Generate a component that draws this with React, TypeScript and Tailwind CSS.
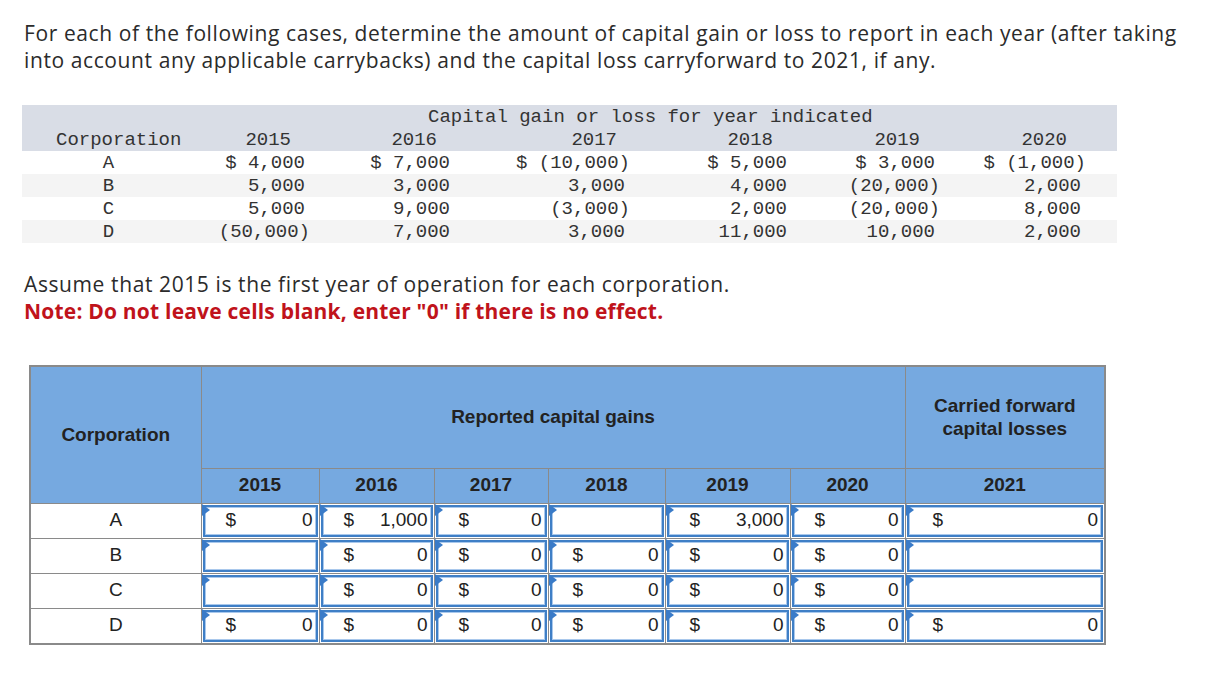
const given = [
  { corp: "A", vals: ["$ 4,000", "$ 7,000", "$ (10,000)", "$ 5,000", "$ 3,000", "$ (1,000)"] },
  { corp: "B", vals: ["5,000", "3,000", "3,000", "4,000", "(20,000)", "2,000"] },
  { corp: "C", vals: ["5,000", "9,000", "(3,000)", "2,000", "(20,000)", "8,000"] },
  { corp: "D", vals: ["(50,000)", "7,000", "3,000", "11,000", "10,000", "2,000"] },
];

const topYears = [
  { year: "2015", w: "w-[115px]", pr: "pr-[19px]" },
  { year: "2016", w: "w-[145px]", pr: "pr-[18px]" },
  { year: "2017", w: "w-[175px]", pr: "pr-[13px]" },
  { year: "2018", w: "w-[162px]", pr: "pr-[19px]" },
  { year: "2019", w: "w-[148px]", pr: "pr-[20px]" },
  { year: "2020", w: "w-[146px]", pr: "pr-[19px]" },
];

// null = empty input, otherwise value shown after "$"
const answers: (string | null)[][] = [
  ["0", "1,000", "0", null, "3,000", "0", "0"],
  [null, "0", "0", "0", "0", "0", null],
  [null, "0", "0", "0", "0", "0", null],
  ["0", "0", "0", "0", "0", "0", "0"],
];

const years = ["2015", "2016", "2017", "2018", "2019", "2020"];
const colW = ["w-[118px]", "w-[115px]", "w-[114px]", "w-[117px]", "w-[125px]", "w-[115px]"];

function AnswerCell({ value, wide }: { value: string | null; wide?: boolean }) {
  return (
    <td className="border border-[#8a8a8a] p-[1px] align-middle">
      <div className="relative flex items-center justify-between h-[32px] border-2 border-[#3f7fc6] bg-white shadow-[inset_0_0_0_1px_#a9c8ec] text-[19px] text-[#222]">
        <span className="absolute -left-[3px] -top-[3px] w-0 h-0 border-y-[6px] border-y-transparent border-l-[8px] border-l-[#3a7bc8]" />
        {value !== null && (
          <>
            <span className={wide ? "pl-[24px]" : "pl-[21px]"}>$</span>
            <span className="pr-[3px]">{value}</span>
          </>
        )}
      </div>
    </td>
  );
}

export default function App() {
  return (
    <div className="min-h-screen bg-white pt-[20px] text-[#2b2b2b]" style={{ fontFamily: "'Open Sans', 'Liberation Sans', sans-serif" }}>
      <p className="pl-[24px] text-[21px] leading-[27px] tracking-[0.6px]">
        For each of the following cases, determine the amount of capital gain or loss to report in each year (after taking
        <br />
        into account any applicable carrybacks) and the capital loss carryforward to 2021, if any.
      </p>

      <div className="ml-[22px] mt-[31px] w-[1095px] text-[19px] leading-[23px] text-[#333] font-['Liberation_Mono',monospace]">
        <div className="bg-[#d9dde6]">
          <div className="h-[23px] pl-[406px] pt-[1px] whitespace-pre">Capital gain or loss for year indicated</div>
          <div className="flex h-[23px] pt-[1px]">
            <div className="w-[173px] pl-[34px]">Corporation</div>
            {topYears.map((y) => (
              <div key={y.year} className={`${y.w} ${y.pr} text-right`}>
                {y.year}
              </div>
            ))}
          </div>
        </div>
        {given.map((row, i) => (
          <div key={row.corp} className={`flex h-[23px] pt-[1px] ${i % 2 === 1 ? "bg-[#f4f4f4]" : "bg-white"}`}>
            <div className="w-[173px] text-center">{row.corp}</div>
            {row.vals.map((v, j) => (
              <div key={j} className={`${topYears[j].w} text-right whitespace-pre ${v.endsWith(")") ? "" : "pr-[5px]"}`}>
                {v}
              </div>
            ))}
          </div>
        ))}
      </div>

      <div className="pl-[24px] mt-[28px] text-[21px] leading-[27px]">
        <p className="tracking-[0.6px]">Assume that 2015 is the first year of operation for each corporation.</p>
        <p className="font-bold tracking-[0.2px] text-[#c0131b]">Note: Do not leave cells blank, enter "0" if there is no effect.</p>
      </div>

      <table className="ml-[29px] mt-[40px] w-[1075px] table-fixed border-collapse border-2 border-[#8a8a8a] text-[19px] text-[#222] font-['Liberation_Sans',Arial,sans-serif]">
        <colgroup>
          <col className="w-[171px]" />
          {colW.map((w, i) => (
            <col key={i} className={w} />
          ))}
          <col className="w-[200px]" />
        </colgroup>
        <thead className="bg-[#76a9e0] font-bold">
          <tr className="h-[102px]">
            <th rowSpan={2} className="border border-[#8a8a8a] font-bold">Corporation</th>
            <th colSpan={6} className="border border-[#8a8a8a] font-bold">Reported capital gains</th>
            <th className="border border-[#8a8a8a] font-bold leading-[23px]">
              Carried forward
              <br />
              capital losses
            </th>
          </tr>
          <tr className="h-[35px]">
            {years.map((y) => (
              <th key={y} className="border border-[#8a8a8a] font-bold">{y}</th>
            ))}
            <th className="border border-[#8a8a8a] font-bold">2021</th>
          </tr>
        </thead>
        <tbody>
          {answers.map((row, i) => (
            <tr key={i} className="h-[34px]">
              <td className="border border-[#8a8a8a] text-center">{"ABCD"[i]}</td>
              {row.map((v, j) => (
                <AnswerCell key={j} value={v} wide={j === 6} />
              ))}
            </tr>
          ))}
        </tbody>
      </table>
    </div>
  );
}
